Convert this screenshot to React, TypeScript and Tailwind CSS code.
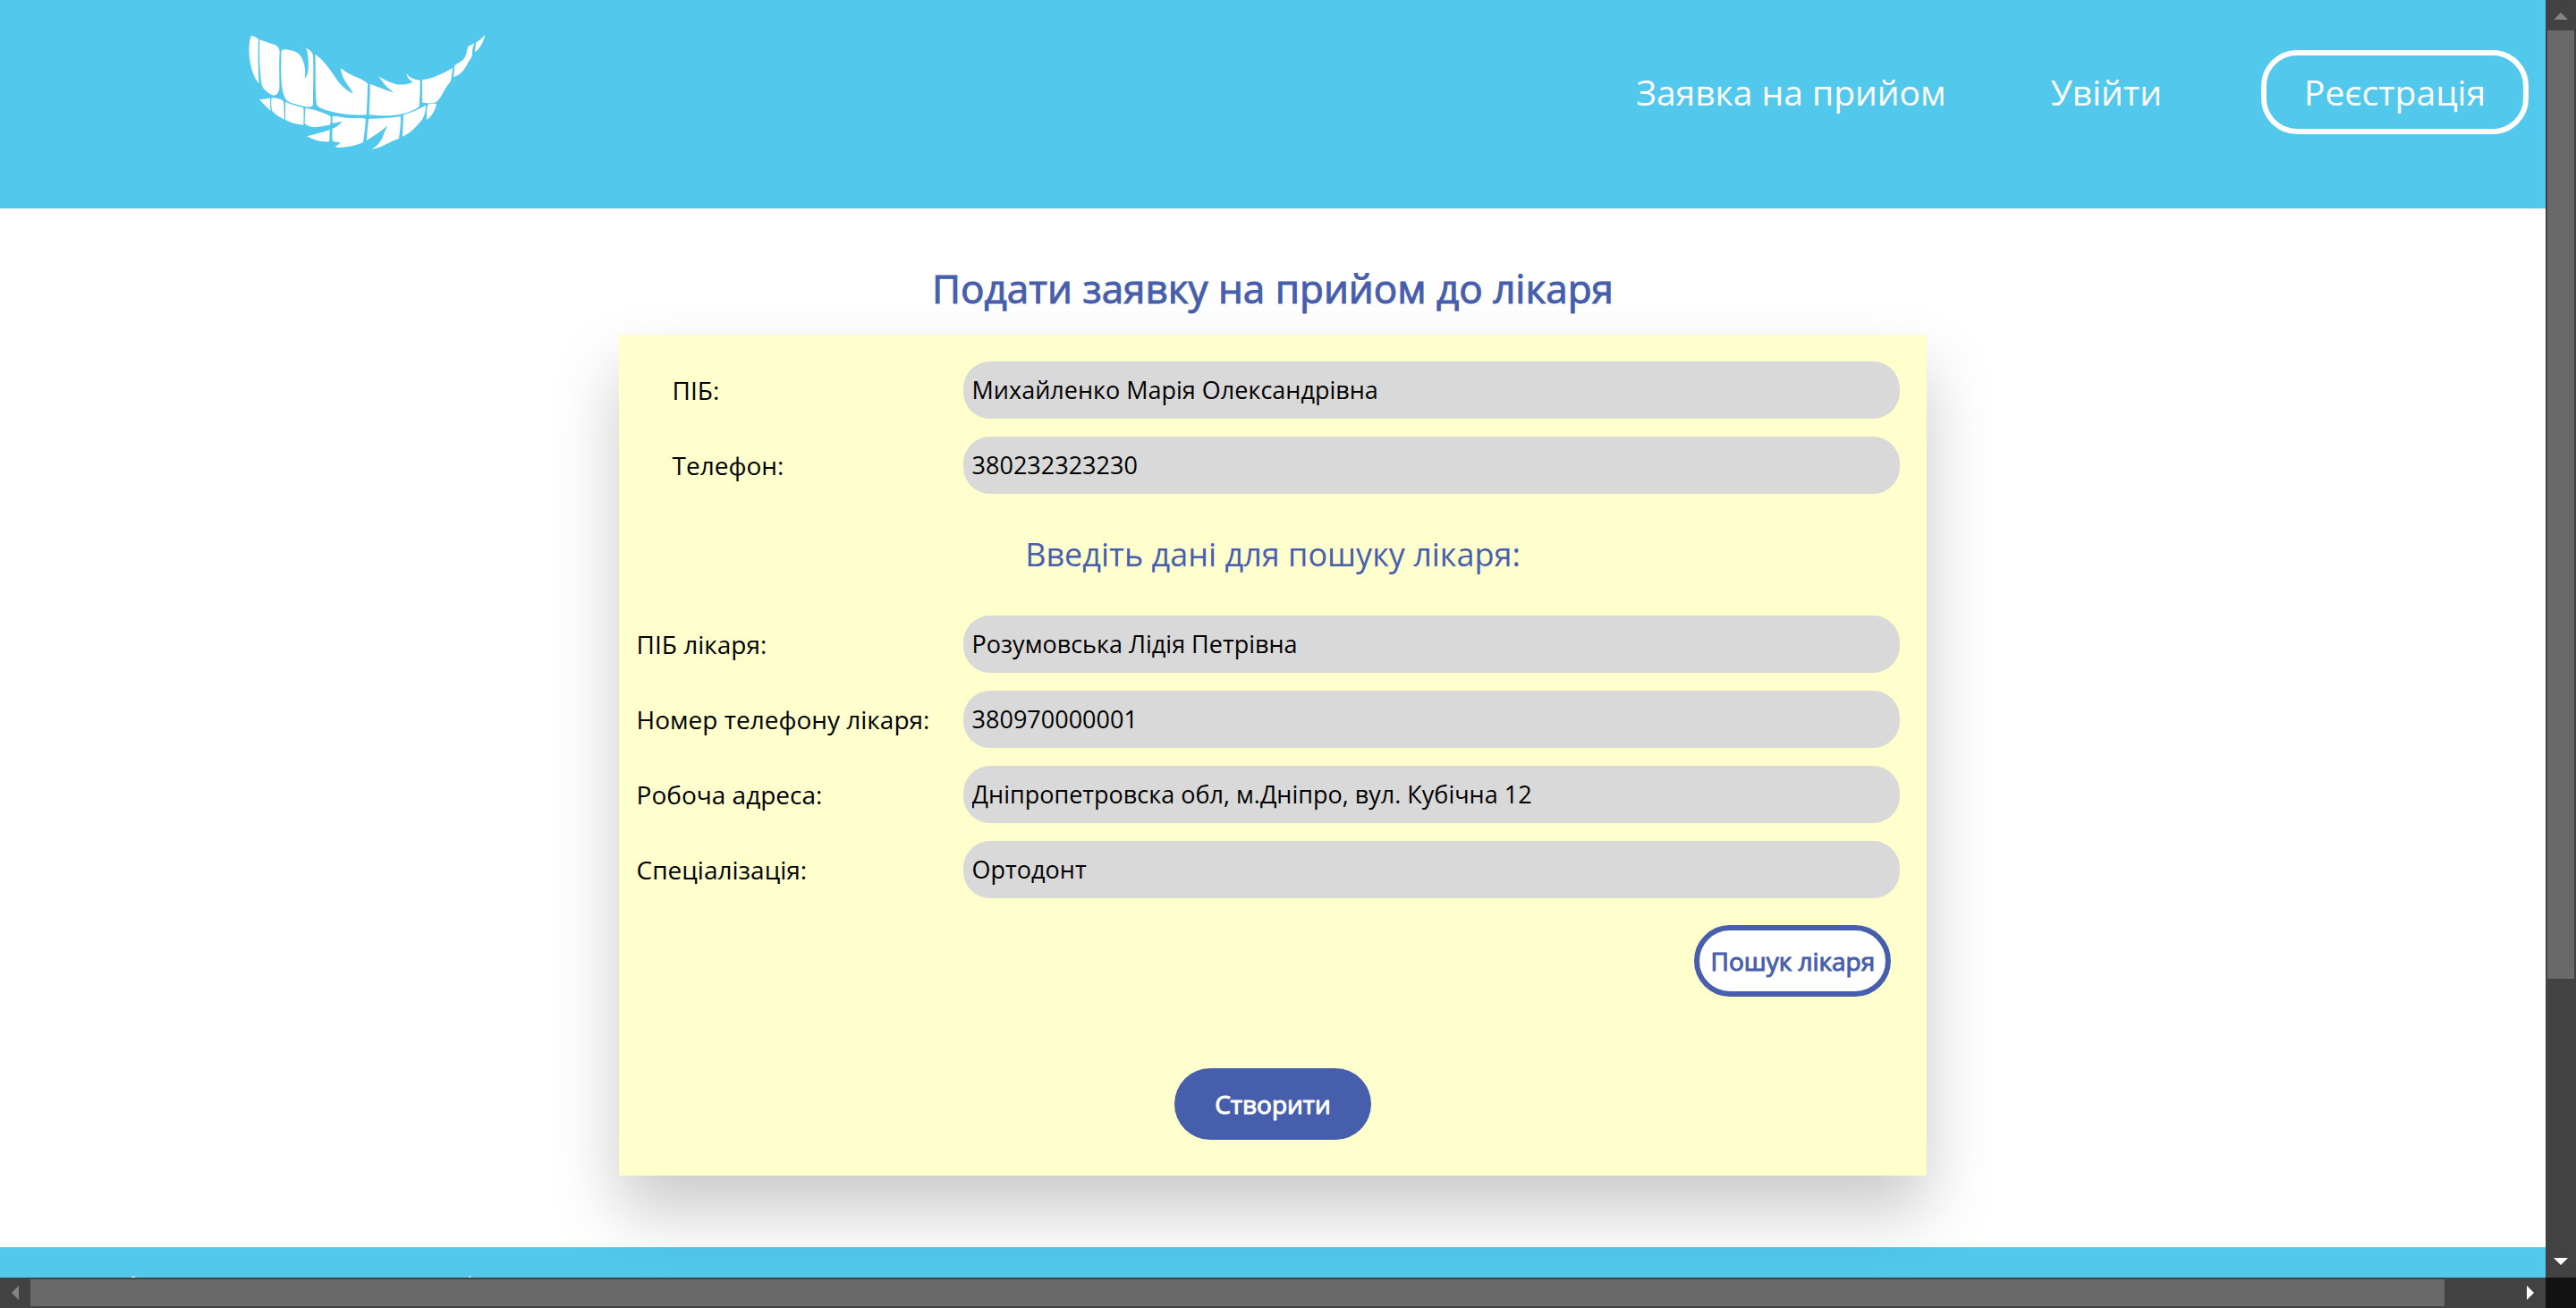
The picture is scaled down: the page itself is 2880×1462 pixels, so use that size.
const LOGO_PATHS = [
  "M64 59C70 60 80 65 87 71C85 120 86 180 89 220C65 195 50 130 57 80C59 70 61 62 64 59Z",
  "M91 73C110 80 130 86 143 91C153 95 158 105 158 115C155 150 158 200 157 235C156 250 148 260 138 260C120 255 103 240 98 225C90 180 90 120 91 73Z",
  "M163 112C168 104 180 105 195 109C215 113 225 120 232 134C243 155 246 180 242 203C252 195 256 170 254 140C253 122 250 110 246 102C258 105 268 115 270 127C272 180 270 240 270 290C268 300 255 300 240 297C220 292 200 288 185 280C172 270 166 240 164 215C161 180 164 145 163 112Z",
  "M277 123C300 135 325 170 345 200C365 230 385 245 405 254C395 235 375 215 367 190C364 180 363 172 364 168C375 180 400 193 420 200C435 207 450 215 454 222C452 255 452 290 449 325C400 328 360 322 320 311C300 305 283 300 281 285C276 230 280 175 277 123Z",
  "M461 221C480 228 515 243 541 250C520 235 510 225 500 210C495 203 490 197 484 195C500 200 520 215 545 221C570 227 590 222 605 215C592 208 583 195 583 186C595 203 612 208 629 209C629 235 629 270 626 295C620 307 590 318 560 324C530 330 490 328 458 325C458 290 462 255 461 221Z",
  "M636 208C670 203 710 185 738 167C736 185 735 200 731 214C720 225 710 245 702 258C692 275 685 285 670 286C655 287 640 286 636 283Z",
  "M744 160C755 152 775 145 780 130C785 120 787 105 790 95C798 93 806 88 812 84C806 95 803 110 804 122C803 135 795 140 790 150C778 175 762 195 741 198C743 185 744 172 744 160Z",
  "M817 82C830 75 840 65 847 56C845 70 838 85 830 97C825 106 818 112 813 115C814 105 815 92 817 82Z",
  "M90 272C105 275 118 268 126 269C125 285 126 298 128 312C115 298 100 287 90 272Z",
  "M131 268C142 266 158 270 170 278C173 282 172 300 174 341C160 335 145 325 133 313C130 300 128 280 131 268Z",
  "M177 281C195 290 215 296 236 301C240 303 239 325 238 359C220 358 195 352 177 342Z",
  "M244 303C270 305 305 318 328 329C330 340 330 350 326 360C310 360 300 365 280 366C262 367 245 362 242 352Z",
  "M250 397C265 392 300 385 326 375C325 390 326 405 324 415C300 417 270 410 250 397Z",
  "M335 331C350 327 370 336 400 336C425 337 440 333 447 340C445 365 442 395 438 417C415 428 380 436 350 434L343 430C352 428 360 422 362 416C352 418 342 417 335 412C334 400 334 385 335 371C348 367 360 357 367 347C355 349 345 352 335 353Z",
  "M457 338C490 338 530 336 563 330C566 355 560 385 558 405C530 412 500 437 466 440C485 430 498 415 505 395C510 380 516 370 520 361C500 380 475 395 450 411C452 385 452 360 457 338Z",
  "M573 325C600 318 625 305 648 293C648 320 640 340 622 357C610 372 590 390 570 398Z",
  "M655 290C665 287 675 287 684 288C680 310 668 330 652 342C650 325 650 305 655 290Z",
];

function Logo({ className }: { className: string }) {
  return (
    <svg viewBox="0 0 900 480" className={className} fill="white" aria-hidden="true">
      {LOGO_PATHS.map((d) => (
        <path key={d} d={d} />
      ))}
    </svg>
  );
}

type FieldProps = { id: string; label: string; value: string; indent?: boolean };

function Field({ id, label, value, indent }: FieldProps) {
  return (
    <div className="flex items-center">
      <label
        htmlFor={id}
        className={
          indent
            ? "w-[365px] shrink-0 pl-10 text-[28px] leading-10"
            : "w-[365px] shrink-0 text-[28px] leading-10"
        }
      >
        {label}
      </label>
      <input
        id={id}
        type="text"
        defaultValue={value}
        className="h-16 min-w-0 flex-1 rounded-[30px] bg-[#d9d9d9] px-2.5 pb-0.5 text-[27px] outline-none"
      />
    </div>
  );
}

const PATIENT_FIELDS: FieldProps[] = [
  { id: "patient-name", label: "ПІБ:", value: "Михайленко Марія Олександрівна" },
  { id: "patient-phone", label: "Телефон:", value: "380232323230" },
];

const DOCTOR_FIELDS: FieldProps[] = [
  { id: "doctor-name", label: "ПІБ лікаря:", value: "Розумовська Лідія Петрівна" },
  { id: "doctor-phone", label: "Номер телефону лікаря:", value: "380970000001" },
  { id: "doctor-address", label: "Робоча адреса:", value: "Дніпропетровска обл, м.Дніпро, вул. Кубічна 12" },
  { id: "doctor-speciality", label: "Спеціалізація:", value: "Ортодонт" },
];

function Arrow({ points, fill }: { points: string; fill: string }) {
  return (
    <svg viewBox="0 0 34 34" className="size-[34px] shrink-0" aria-hidden="true">
      <polygon points={points} fill={fill} />
    </svg>
  );
}

export default function App() {
  return (
    <div className="grid h-screen grid-cols-[minmax(0,1fr)_34px] grid-rows-[minmax(0,1fr)_34px] overflow-hidden bg-white font-['Open_Sans','Noto_Sans',sans-serif] text-black">
      <div className="overflow-hidden">
        <header className="flex items-start justify-between bg-[#52c8ed] pt-5 pr-[19px] pb-[53px] pl-[260px] text-white">
          <a href="#home" aria-label="Головна">
            <Logo className="block h-[160px] w-[300px]" />
          </a>
          <nav className="mt-9 flex items-center text-[39px] leading-[54px]">
            <a href="#request" className="mr-[117px]">
              Заявка на прийом
            </a>
            <a href="#login" className="mr-[111px]">
              Увійти
            </a>
            <a href="#register" className="rounded-[40px] border-[6px] border-white px-[42px] py-3.5">
              Реєстрація
            </a>
          </nav>
        </header>

        <main className="flex flex-col items-center pt-15 pb-20">
          <h1 className="mb-[23px] text-[44px] leading-[58px] text-[#465eac] [-webkit-text-stroke:1px_#465eac]">
            Подати заявку на прийом до лікаря
          </h1>
          <form className="relative z-10 flex w-[51.4%] flex-col bg-[#ffffce] pt-[30px] pr-[30px] pb-10 pl-5 shadow-[0_40px_70px_rgba(0,0,0,0.21)]">
            <div className="flex flex-col gap-5">
              {PATIENT_FIELDS.map((f) => (
                <Field key={f.id} {...f} indent />
              ))}
            </div>
            <h2 className="my-[46px] -mr-2.5 text-center text-[36px] leading-[44px] text-[#465eac]">
              Введіть дані для пошуку лікаря:
            </h2>
            <div className="flex flex-col gap-5">
              {DOCTOR_FIELDS.map((f) => (
                <Field key={f.id} {...f} />
              ))}
            </div>
            <button
              type="button"
              className="mt-[30px] mr-2.5 h-20 w-[220px] self-end rounded-[40px] border-[6px] border-[#465eac] bg-white text-[28px] whitespace-nowrap text-[#465eac] [-webkit-text-stroke:1px_#465eac]"
            >
              Пошук лікаря
            </button>
            <button
              type="submit"
              className="mt-20 -mr-2.5 h-20 w-[220px] self-center rounded-[40px] bg-[#465eac] text-[28px] text-white [-webkit-text-stroke:1px_white]"
            >
              Створити
            </button>
          </form>
        </main>

        <footer className="bg-[#52c8ed] pt-1 pl-[117px]">
          <Logo className="block h-[232px] w-[435px]" />
        </footer>
      </div>

      <div className="flex flex-col bg-[#424242]">
        <Arrow points="9,22 25,22 17,14" fill="#848484" />
        <div className="mx-0.5 flex-[1060] bg-[#696969]" />
        <div className="flex-[300]" />
        <Arrow points="9,12 25,12 17,20" fill="#ffffff" />
      </div>
      <div className="flex bg-[#424242]">
        <Arrow points="21,9 21,25 13,17" fill="#848484" />
        <div className="my-0.5 flex-[2699] bg-[#696969]" />
        <div className="flex-[79]" />
        <Arrow points="13,9 13,25 21,17" fill="#ffffff" />
      </div>
      <div className="bg-[#121212]" />
    </div>
  );
}
